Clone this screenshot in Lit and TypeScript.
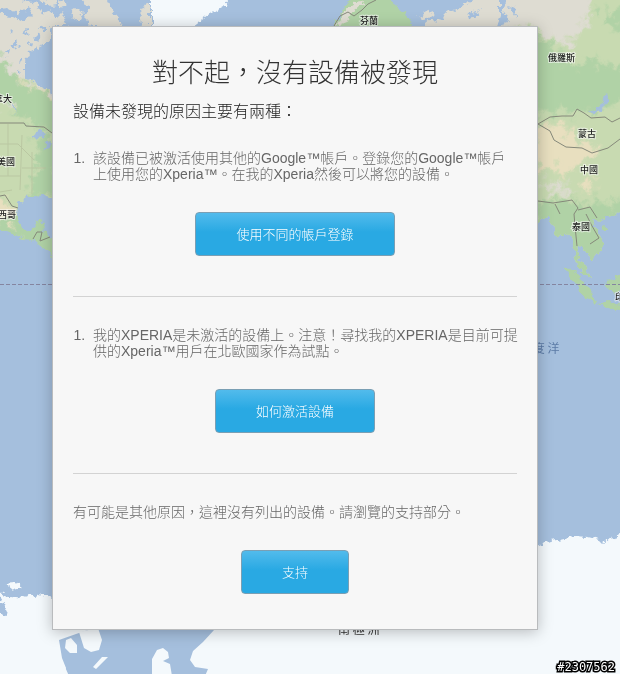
import { LitElement, html, css, svg } from "lit";
import { customElement } from "lit/decorators.js";

const labels = [
  { text: "拿大", x: 12, y: 102, end: true },
  { text: "美國", x: 15, y: 165, end: true },
  { text: "西哥", x: 16, y: 218, end: true },
  { text: "芬蘭", x: 360, y: 24 },
  { text: "俄羅斯", x: 548, y: 61 },
  { text: "蒙古", x: 578, y: 137 },
  { text: "中國", x: 580, y: 173 },
  { text: "泰國", x: 572, y: 230 },
  { text: "印尼", x: 615, y: 300 },
];

@customElement("world-map")
class WorldMap extends LitElement {
  static styles = css`
    :host { display: block; overflow: hidden; background: #a5bfdd; }
    svg { display: block; width: 100%; height: 100%; }
    .label {
      font: 500 9px "Noto Sans CJK TC", sans-serif;
      fill: #222;
      stroke: rgba(255, 255, 255, 0.6);
      stroke-width: 2px;
      paint-order: stroke;
    }
    .end { text-anchor: end; }
    .wide { font: 12px "Noto Sans CJK TC", sans-serif; fill: #333; }
    .sea { fill: #5c7ba6; }
    .ocean { fill: #a5bfdd; }
    .ice { fill: #f4f9fc; }
    .tundra { fill: #dedcd2; }
    .plain { fill: #c8dab1; }
    .forest { fill: #b0d2a6; }
    .desert { fill: #e8dfbf; }
    .border { fill: none; stroke: #85887a; stroke-width: 1px; }
    .state { fill: none; stroke: #bac7a2; stroke-width: 1px; }
    .equator { stroke: #8585a0; stroke-width: 1px; stroke-dasharray: 4 2; shape-rendering: crispEdges; }
  `;

  render() {
    return html`
      <svg viewBox="0 0 620 674" preserveAspectRatio="xMinYMin slice" aria-hidden="true">
        <defs>
          <filter id="coast" x="-5%" y="-5%" width="110%" height="110%">
            <feTurbulence type="fractalNoise" baseFrequency="0.16" numOctaves="3" seed="4" />
            <feDisplacementMap in="SourceGraphic" scale="9" xChannelSelector="R" yChannelSelector="G" />
          </filter>
          <filter id="blend" x="-10%" y="-10%" width="120%" height="120%">
            <feTurbulence type="fractalNoise" baseFrequency="0.12" numOctaves="4" seed="9" />
            <feDisplacementMap in="SourceGraphic" scale="36" xChannelSelector="R" yChannelSelector="G" />
            <feGaussianBlur stdDeviation="1" />
          </filter>
          <clipPath id="america">
            <path d="M-8 14L12 16 24 22 34 12 44 16 50 24 52 38 44 45 30 52 25 62 25 76 36 83 46 89 60 98V186L50 197 38 194 26 197 18 203 17 217 21 228 30 231 35 225 38 221 45 222 43 231 50 238 60 242V264L46 251 38 243 26 239 12 234 -8 226Z" />
          </clipPath>
          <clipPath id="asia">
            <path d="M500 -8H640V206L620 212 607 217 599 221 593 219 594 226 601 236 604 247 596 256 594 259 588 254 580 246 578 251 580 261 587 268 590 280 583 274 577 264 575 252 570 238 566 232 560 238 557 237 553 226 549 216 543 219 536 226 500 210Z" />
          </clipPath>
        </defs>

        <g filter="url(#coast)">
          <path class="tundra" d="M-8 -8H18L26 2 38 4 42 14 50 10 56 18 62 12 68 26H48L38 22 28 8 18 14 8 8 -8 10ZM28 -6H56L58 5 50 6 44 2ZM78 -6H104L112 10 120 20 124 28H94L84 18 90 10Z" />
          <path class="tundra" d="M72 12L78 8 84 14 80 22 75 20ZM60 0L66 4 60 8ZM140 8L150 4V28H142Z" />
          <path class="ice" d="M151 -8H236L224 6 208 15 198 22 196 30H151Z" />
          <path class="forest" d="M332 30L340 16 344 8 355 -6H384L392 4 406 12 412 24 410 30Z" />
          <path class="tundra" d="M336 26L344 12 358 0 364 3 354 10 346 22ZM420 30L432 20 442 22 448 8 456 12 468 2 480 -6H545V32ZM418 16L428 10 434 14 424 20Z" />
          <g clip-path="url(#america)">
            <path class="tundra" d="M-10 -10H70V270H-10Z" />
            <g filter="url(#blend)">
              <path class="plain" d="M-30 106L70 106V280H-30Z" />
              <path class="forest" d="M-20 50L6 62 12 76 28 80 70 100V138L46 130 20 118 10 102 -20 96Z" />
              <path class="forest" d="M38 130L60 142V200L28 200 36 178ZM30 218H60V270L30 244 -10 232 -10 224Z" />
              <path class="desert" d="M-10 194L6 200 14 224 -4 222ZM22 80L56 92 54 96 20 82Z" />
            </g>
            <path class="ocean" d="M31 134L40 130 48 134 44 138 36 139ZM45 144L51 141 48 151 44 150ZM12 104L17 112 13 110ZM21 58L24 61 19 64ZM12 45L16 40 18 48ZM34 38L38 34 40 42ZM24 29L30 32 26 36ZM9 31L13 28 12 36ZM4 52L8 50 7 56ZM28 44L31 42 30 48ZM16 68L19 70 16 73ZM41 28L44 26 44 32Z" />
          </g>
          <g clip-path="url(#asia)">
            <path class="plain" d="M490 -10H640V300H490Z" />
            <g filter="url(#blend)">
              <path class="tundra" d="M480 -30H590L588 20 572 42 556 44 538 28 480 32Z" />
              <path class="forest" d="M530 30L548 44 570 64 600 62 640 76V100L590 112 556 112 530 118Z" />
              <path class="desert" d="M530 128L556 124 576 134 596 150 584 164 562 172 530 168Z" />
              <path class="forest" d="M530 206L560 198 590 204 640 196V280H560ZM600 6L640 16V30L610 28Z" />
              <path class="tundra" d="M540 184L562 182 574 194 552 192Z" />
              <path class="desert" d="M582 180L592 182 590 194 584 192Z" />
            </g>
            <path class="ocean" d="M590 113L600 106 606 93 608 99 602 109 593 115Z" />
          </g>
          <path class="forest" d="M565 267L573 271 584 282 591 291 597 303 591 301 580 292ZM598 303L608 302 624 307 620 310 603 307ZM606 281L613 279 624 272V292L610 291 605 286ZM603 227L608 226 609 231 605 231Z" />
          <path class="ocean" d="M500 -6L508 -4 503 10 508 18 501 28 496 26 500 16ZM465 15L480 10 472 20ZM508 6L516 8 517 18Z" />
          <path class="ice" d="M-10 588L3 594 10 596 22 598 34 594 48 597 60 599V690H-10ZM4 584L16 583 22 587 12 590Z" />
          <path class="ocean" d="M-4 590L4 604 8 612 3 616 -4 606Z" />
          <path class="ice" d="M530 548L546 542 562 539 574 536 588 537 600 540 604 544 611 538 622 535 630 536V690H530Z" />
        </g>
        <path class="ice" d="M50 600H540V690H50Z" />
        <path class="ocean" d="M59 640L76 634 88 630H214L203 642 193 651 190 660 195 667 208 669 205 676H63L66 668 62 658Z" />
        <path class="ice" d="M79 632L98 628 102 640 99 650 91 652 84 648ZM66 640L71 638 77 645 77 653 70 653 65 648ZM102 657L108 657 96 669 93 667ZM152 676L152 659 157 650 163 648 168 652 169 658 163 661 170 664 172 676ZM55 672L62 660 69 676Z" />

        <path class="state" d="M0 144H18L34 160M8 124V176M0 176H20M22 135L20 190M32 152V194M22 168H46M0 192L12 190" />
        <path class="border" d="M0 123H24L26 126 44 127 52 133M0 196L5 195 12 206 18 208M33 239L37 232 42 232 40 241 50 237M334 26L340 16 348 12 354 16 362 10 368 4 376 0" />
        <path class="border" d="M538 124L550 117 562 116 573 116 577 109 584 113 591 118 605 117 612 122 620 118M538 124L550 131 554 140 566 147 582 148 592 153 608 148 620 139M538 201L553 203 566 201 572 200 578 208 574 214 575 226 577 246M555 204L560 214M586 214L592 226 599 238 590 244M578 210L590 207 597 218" />
        <path class="equator" d="M0 284H620" />

        ${labels.map(
          (l) => svg`<text class=${l.end ? "label end" : "label"} x=${l.x} y=${l.y}>${l.text}</text>`
        )}
        <text class="wide sea" x="518" y="353">印 度 洋</text>
        <text class="wide" x="338" y="634">南 極 洲</text>
      </svg>
    `;
  }
}

@customElement("app-root")
class AppRoot extends LitElement {
  static styles = css`
    :host {
      display: block;
      position: relative;
      box-sizing: border-box;
      min-height: 100vh;
      padding: 26px 82px 44px 52px;
      font-family: "Liberation Sans", "Noto Sans CJK TC", sans-serif;
      font-size: 14px;
      font-weight: 300;
      line-height: 16px;
      color: #666;
    }
    .map { position: absolute; inset: 0; }
    .card {
      position: relative;
      display: flex;
      flex-direction: column;
      padding: 28px 20px 35px;
      background: #f7f7f7;
      border: 1px solid #b9bbbd;
      box-shadow: 0 2px 14px rgba(0, 0, 0, 0.25);
    }
    h1, h2, p, ol { margin: 0; font-weight: 300; }
    h1 { font-size: 26px; line-height: 36px; text-align: center; color: #333; }
    h2 { margin: 10px 0 27px; font-size: 16px; line-height: 22px; color: #222; }
    ol { margin-right: -4px; padding-left: 16px; }
    li { padding-left: 4px; }
    button {
      align-self: center;
      height: 44px;
      margin-top: 30px;
      padding: 2px 40px 0;
      border: 1px solid #7a9fb4;
      border-radius: 4px;
      background: linear-gradient(#52bbec, #29a9e3 45%, #29a9e3);
      font: inherit;
      font-size: 13px;
      color: #fff;
      cursor: pointer;
    }
    hr { width: 100%; height: 1px; margin: 40px 0 30px; border: 0; background: #d3d3d3; }
    .stamp {
      position: absolute;
      right: 5px;
      bottom: 0;
      font: 12px/14px "DejaVu Sans Mono", monospace;
      color: #fff;
      -webkit-text-stroke: 3px #000;
      paint-order: stroke fill;
    }
  `;

  render() {
    return html`
      <world-map class="map"></world-map>
      <main class="card" lang="zh-Hant">
        <h1>對不起，沒有設備被發現</h1>
        <h2>設備未發現的原因主要有兩種：</h2>
        <ol>
          <li>該設備已被激活使用其他的Google™帳戶。登錄您的Google™帳戶<br />上使用您的Xperia™。在我的Xperia然後可以將您的設備。</li>
        </ol>
        <button type="button">使用不同的帳戶登錄</button>
        <hr />
        <ol>
          <li>我的XPERIA是未激活的設備上。注意！尋找我的XPERIA是目前可提<br />供的Xperia™用戶在北歐國家作為試點。</li>
        </ol>
        <button type="button">如何激活設備</button>
        <hr />
        <p>有可能是其他原因，這裡沒有列出的設備。請瀏覽的支持部分。</p>
        <button type="button">支持</button>
      </main>
      <span class="stamp">#2307562</span>
    `;
  }
}
